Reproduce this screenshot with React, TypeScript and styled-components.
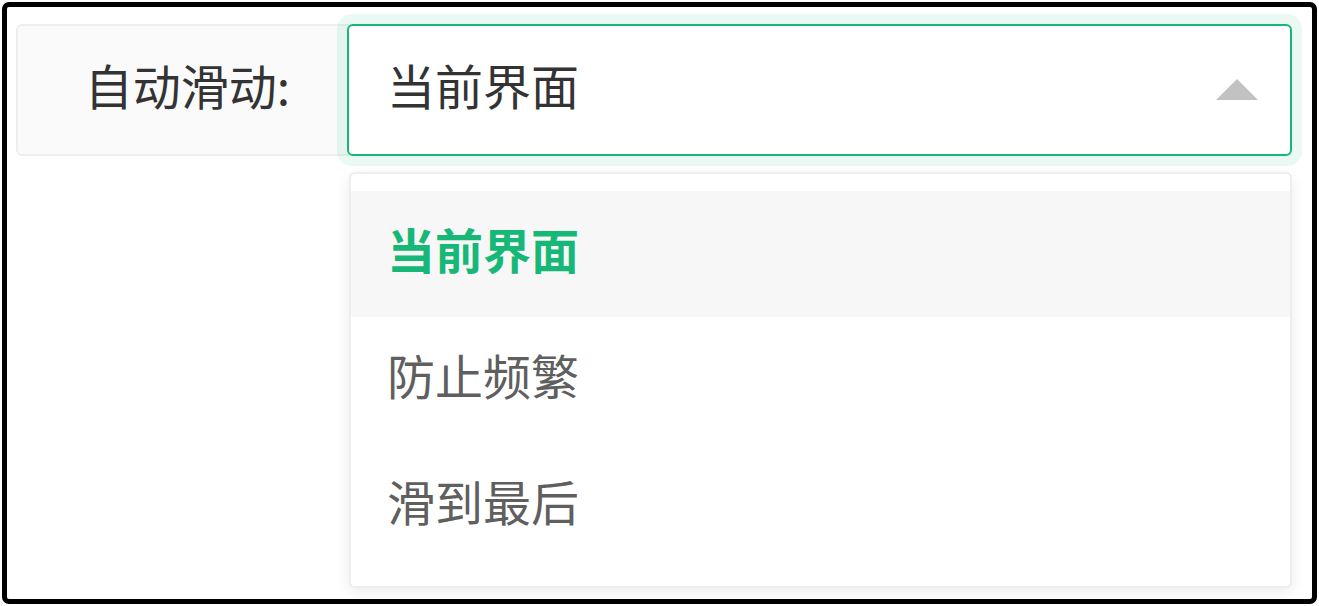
import * as React from "react";
import { useState } from "react";
import styled, { createGlobalStyle } from "styled-components";

const GlobalStyle = createGlobalStyle`
  html, body {
    margin: 0;
    padding: 0;
    background: #fff;
  }
  body {
    font-family: "Noto Sans CJK SC", "Noto Sans", sans-serif;
  }
`;

const Frame = styled.div`
  box-sizing: border-box;
  margin: 2px;
  width: 1315px;
  height: 602px;
  border: 5px solid #000;
  border-radius: 7px;
  padding: 17px 20px 0 9px;
  overflow: hidden;
`;

const FormItem = styled.div`
  position: relative;
  display: flex;
`;

const Label = styled.label`
  box-sizing: border-box;
  flex: 0 0 333px;
  height: 132px;
  margin-right: -2px;
  display: flex;
  align-items: center;
  justify-content: flex-end;
  padding: 0 57px 12px 0;
  background: #fafafa;
  border: 2px solid #eee;
  border-radius: 6px 0 0 6px;
  font-size: 48px;
  color: #333;
`;

const Select = styled.div`
  position: relative;
  flex: 1;
`;

const Input = styled.div`
  position: relative;
  box-sizing: border-box;
  height: 132px;
  display: flex;
  align-items: center;
  padding: 0 0 12px 38px;
  background: #fff;
  border: 2.5px solid #16b777;
  border-radius: 6px;
  box-shadow: 0 0 0 10px rgba(22, 183, 119, 0.09);
  font-size: 48px;
  color: #333;
`;

const Arrow = styled.i`
  position: absolute;
  right: 32px;
  top: 53px;
  width: 0;
  height: 0;
  border-left: 21px solid transparent;
  border-right: 21px solid transparent;
  border-bottom: 21px solid #c2c2c2;
`;

const Dropdown = styled.dl`
  position: absolute;
  top: 148px;
  left: 2px;
  right: 0;
  margin: 0;
  box-sizing: border-box;
  padding: 17px 0;
  background: #fff;
  border: 2px solid #eee;
  border-radius: 6px;
  box-shadow: 0 4px 14px rgba(0, 0, 0, 0.08);
`;

const Option = styled.dd<{ $active?: boolean }>`
  margin: 0;
  box-sizing: border-box;
  height: 126px;
  display: flex;
  align-items: center;
  padding: 0 0 12px 36px;
  font-size: 48px;
  color: ${(p) => (p.$active ? "#16b777" : "#5f5f5f")};
  font-weight: ${(p) => (p.$active ? 700 : 400)};
  background: ${(p) => (p.$active ? "#f7f7f7" : "transparent")};
`;

const options = ["当前界面", "防止频繁", "滑到最后"];

export default function App() {
  const [value, setValue] = useState(options[0]);

  return (
    <>
      <GlobalStyle />
      <Frame>
        <FormItem>
          <Label>自动滑动:</Label>
          <Select>
            <Input>
              {value}
              <Arrow />
            </Input>
            <Dropdown>
              {options.map((o) => (
                <Option key={o} $active={o === value} onClick={() => setValue(o)}>
                  {o}
                </Option>
              ))}
            </Dropdown>
          </Select>
        </FormItem>
      </Frame>
    </>
  );
}
